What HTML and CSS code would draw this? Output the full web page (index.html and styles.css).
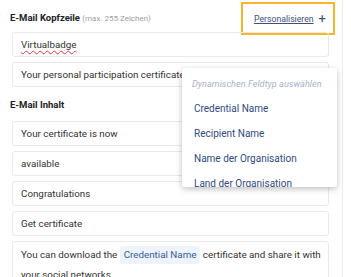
FILE: index.html
```html
<!DOCTYPE html>
<html lang="de">
<head>
    <meta charset="UTF-8">
    <meta name="viewport" content="width=device-width, initial-scale=1.0">
    <title>E-Mail Vorlage</title>
    <link rel="stylesheet" href="styles.css">
</head>
<body>
    <div class="panel">
        <!-- Kopfzeile -->
        <div class="field-head">
            <h4 class="label">E-Mail Kopfzeile <span class="hint">(max. 255 Zeichen)</span></h4>
            <a class="personalize" href="#">
                <span class="personalize-text">Personalisieren</span>
                <span class="plus">+</span>
            </a>
        </div>
        <div class="inputs">
            <div class="input"><span class="misspelled">Virtualbadge</span></div>
            <div class="input">Your personal participation certificate</div>
        </div>

        <!-- Inhalt -->
        <div class="field-head content-head">
            <h4 class="label">E-Mail Inhalt</h4>
        </div>
        <div class="inputs">
            <div class="input">Your certificate is now</div>
            <div class="input">available</div>
            <div class="input">Congratulations</div>
            <div class="input">Get certificate</div>
            <div class="input textarea">
                You can download the <span class="chip">Credential Name</span> certificate and share it with your social networks.
            </div>
        </div>

        <!-- Dropdown -->
        <div class="menu">
            <div class="menu-placeholder">Dynamischen Feldtyp auswählen</div>
            <div class="menu-item">Credential Name</div>
            <div class="menu-item">Recipient Name</div>
            <div class="menu-item">Name der Organisation</div>
            <div class="menu-item">Land der Organisation</div>
        </div>
    </div>
</body>
</html>
```

FILE: styles.css
```css
/* General styles */
body {
    margin: 0;
    padding: 0;
    background: #ffffff;
    font-family: Roboto, "Liberation Sans", sans-serif;
    color: #333333;
    overflow: hidden;
}
.panel {
    position: relative;
    width: 343px;
    height: 277px;
    box-sizing: border-box;
    border-right: 1px solid #ececec;
    padding: 2px 10px 0 10px;
}

/* Field heads */
.field-head {
    display: flex;
    justify-content: space-between;
    align-items: center;
    height: 30px;
    margin-right: -3px;
}
.content-head {
    height: 34px;
}
.label {
    margin: 0;
    font-size: 9.5px;
    font-weight: bold;
    color: #222222;
}
.hint {
    font-size: 8px;
    font-weight: normal;
    color: #a0a0a0;
}
.personalize {
    align-self: flex-start;
    display: flex;
    align-items: center;
    gap: 5px;
    height: 29px;
    margin-bottom: -3px;
    padding: 0 7px 0 11px;
    border: 2px solid #f7b52c;
    text-decoration: none;
    color: #3d4f7c;
    font-size: 8.7px;
}
.personalize-text {
    text-decoration: underline;
}
.plus {
    font-size: 13px;
    line-height: 1;
}

/* Inputs */
.inputs {
    display: flex;
    flex-direction: column;
    gap: 5px;
    padding: 0 3px 0 2px;
}
.input {
    height: 25px;
    box-sizing: border-box;
    border: 1px solid #e9e9e9;
    border-radius: 3px;
    padding: 0 8px;
    display: flex;
    align-items: center;
    font-size: 9.8px;
    color: #333333;
}
.misspelled {
    text-decoration: underline wavy #e53935;
    text-decoration-thickness: 1px;
    text-underline-offset: 2px;
}
.textarea {
    display: block;
    height: 60px;
    padding: 3px 4px 3px 8px;
    line-height: 20px;
}
.chip {
    display: inline-block;
    line-height: 18px;
    padding: 0 4px;
    background: #edf4fc;
    border-radius: 3px;
    color: #3a5b9c;
}

/* Dropdown */
.menu {
    position: absolute;
    left: 182px;
    top: 68px;
    width: 155px;
    height: 119px;
    overflow: hidden;
    background: #ffffff;
    border-radius: 3px;
    box-shadow: 0 2px 6px rgba(0, 0, 0, 0.25);
}
.menu-placeholder {
    padding: 10px 10px 0 10px;
    height: 18px;
    font-size: 9.2px;
    font-style: italic;
    color: #a9b3cb;
}
.menu-item {
    height: 25px;
    padding-left: 12px;
    display: flex;
    align-items: center;
    font-size: 10px;
    color: #2f4a86;
}
```
